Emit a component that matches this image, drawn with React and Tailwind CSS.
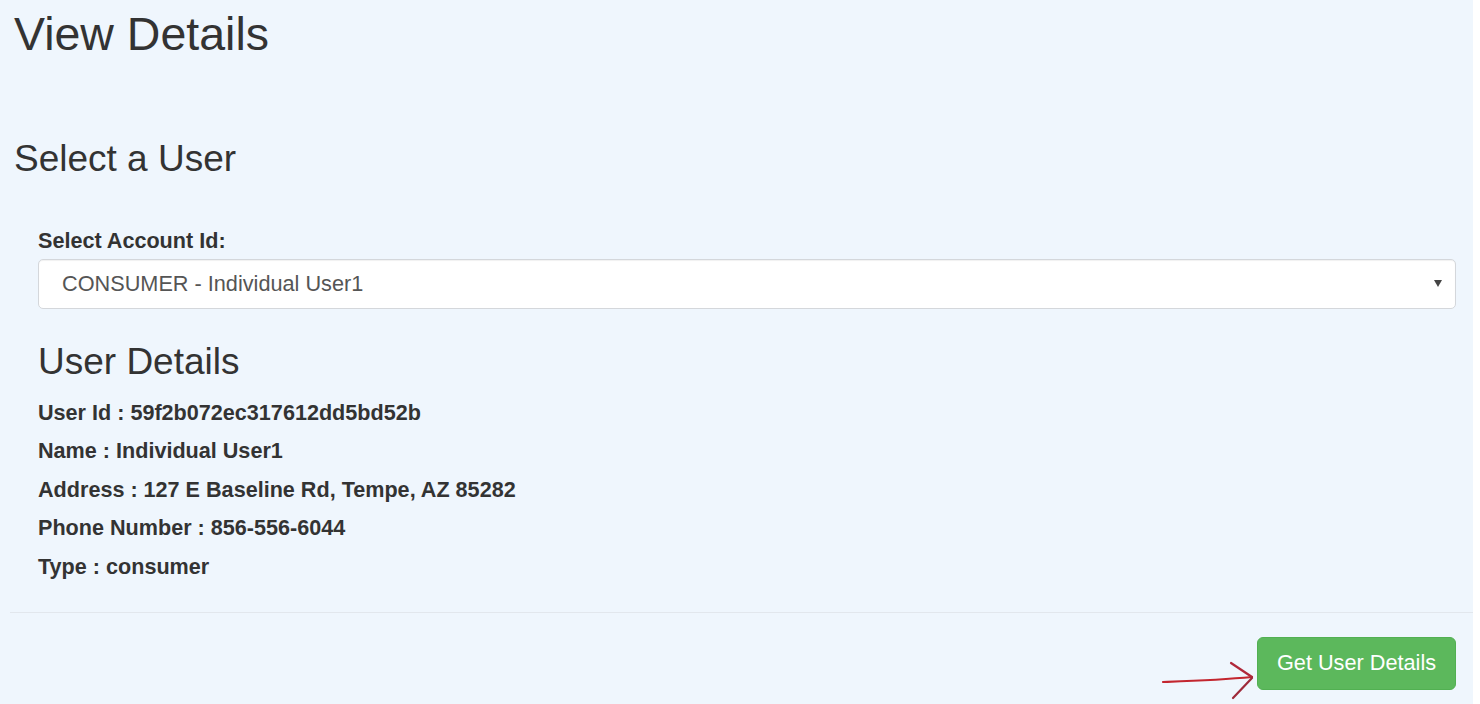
import React from "react";

export default function App() {
  const font = { fontFamily: '"Liberation Sans", Arial, Helvetica, sans-serif' };
  const details = [
    "User Id : 59f2b072ec317612dd5bd52b",
    "Name : Individual User1",
    "Address : 127 E Baseline Rd, Tempe, AZ 85282",
    "Phone Number : 856-556-6044",
    "Type : consumer",
  ];
  return (
    <div className="flex w-[1480px] h-[704px] bg-white overflow-hidden" style={font}>
      <div className="w-[1473px] h-full bg-[#eff6fd] pt-[9px] pl-[14px] text-[#333]">
        <h1 className="text-[46.5px] leading-[1.1] font-normal">View Details</h1>
        <h2 className="mt-[79px] text-[37px] leading-[1.1] font-normal">Select a User</h2>
        <div className="pl-[24px] pr-[17px]">
          <div className="mt-[49px] text-[21.6px] leading-[24px] font-bold">Select Account Id:</div>
          <div className="mt-[6px] h-[50px] flex items-center justify-between bg-white border border-[#d4d7db] rounded-[5px] shadow-[inset_0_1px_1px_rgba(0,0,0,0.06)] pl-[23px] pr-[13px]">
            <span className="text-[21.7px] text-[#555]">CONSUMER - Individual User1</span>
            <svg width="8" height="7" viewBox="0 0 8 7">
              <path d="M0 0 L8 0 L4 7 Z" fill="#444" />
            </svg>
          </div>
          <h3 className="mt-[33px] text-[37px] leading-[1.1] font-normal">User Details</h3>
          <div className="mt-[11px]">
            {details.map((d) => (
              <div key={d} className="text-[21.6px] leading-[38.5px] font-bold">
                {d}
              </div>
            ))}
          </div>
        </div>
        <div className="mt-[26px] ml-[-4px] h-px bg-[#e2e7ed]"></div>
        <div className="flex justify-end items-start pr-[17px] mt-[24px]">
          <svg width="97" height="44" viewBox="0 0 97 44" className="mt-[21px]">
            <path d="M3 24 C 30 23, 60 22, 92 19" stroke="#c3262f" strokeWidth="2.2" fill="none" strokeLinecap="round" />
            <path d="M71 5 L92 19" stroke="#b0283a" strokeWidth="2.2" fill="none" strokeLinecap="round" />
            <path d="M92 20 L73 40" stroke="#9e2a3a" strokeWidth="2.2" fill="none" strokeLinecap="round" />
          </svg>
          <button className="h-[53px] w-[199px] bg-[#5cb85c] border border-[#52b052] rounded-[6px] text-white text-[21.7px]">
            Get User Details
          </button>
        </div>
      </div>
    </div>
  );
}
